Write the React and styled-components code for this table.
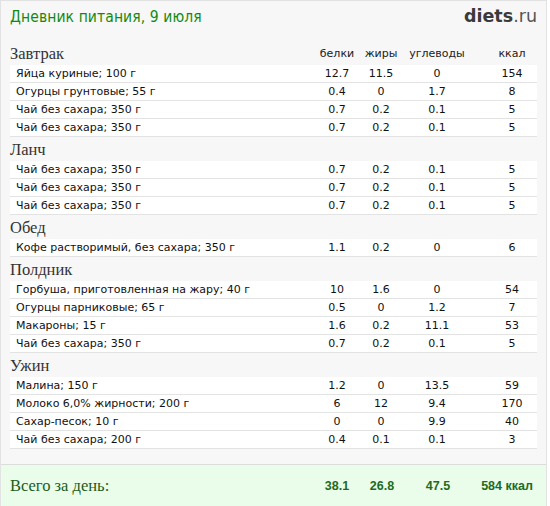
import React from "react";
import styled, { createGlobalStyle } from "styled-components";

const Global = createGlobalStyle`
  html, body { margin: 0; padding: 0; background: #ffffff; }
  * { box-sizing: border-box; }
`;

const Page = styled.div`
  width: 547px;
  height: 506px;
  background: #f7f7f7;
  border: 1px solid #e2e2e2;
  border-bottom: none;
  display: flex;
  flex-direction: column;
  font-family: "DejaVu Sans", Verdana, sans-serif;
`;

const TopBar = styled.header`
  height: 40px;
  padding: 0 9px 0 9px;
  display: flex;
  justify-content: space-between;
  align-items: flex-start;
`;

const Title = styled.h1`
  margin: 6px 0 0 0;
  font-family: "DejaVu Sans Condensed", "DejaVu Sans", Verdana, sans-serif;
  font-weight: normal;
  font-size: 15.5px;
  letter-spacing: 0.1px;
  line-height: 20px;
  color: #128a12;
`;

const Logo = styled.div`
  margin: 4px 0 0 0;
  font-family: "DejaVu Sans", Verdana, sans-serif;
  font-size: 17.5px;
  line-height: 22px;
  color: #444;
  b { font-weight: bold; color: #3a3a3a; }
  span { color: #555; }
`;

const Body = styled.main`
  padding: 0 9px;
  flex: 1;
`;

const Grid = styled.div`
  display: grid;
  grid-template-columns: 1fr 44px 44px 68px 66px;
  align-items: center;
`;

const SectionHead = styled(Grid)`
  height: 24px;
`;

const SectionName = styled.div`
  font-family: "Liberation Serif", "DejaVu Serif", serif;
  font-size: 16.5px;
  color: #333;
  padding-top: 2px;
`;

const ColLabel = styled.div`
  font-size: 11px;
  color: #222;
  text-align: center;
  padding-left: ${(p) => (p.$last ? "16px" : "0")};
`;

const Row = styled(Grid)`
  height: 18px;
  background: #ffffff;
  border-bottom: 1px solid #e3e3e3;
  font-size: 11px;
  color: #111;
`;

const Name = styled.div`
  padding-left: 6px;
  white-space: nowrap;
`;

const Num = styled.div`
  text-align: center;
  padding-left: ${(p) => (p.$last ? "16px" : "0")};
`;

const Footer = styled.footer`
  height: 42px;
  margin-top: 15px;
  background: #eafcea;
  border-top: 1px solid #dcdcdc;
  padding: 0 9px;
  display: grid;
  grid-template-columns: 1fr 44px 46px 66px 66px;
  align-items: center;
`;

const TotalLabel = styled.div`
  font-family: "Liberation Serif", "DejaVu Serif", serif;
  font-size: 16.5px;
  color: #1a5c1a;
`;

const TotalNum = styled.div`
  font-family: "Liberation Sans", Arial, sans-serif;
  font-weight: bold;
  font-size: 12.5px;
  color: #1e6b1e;
  text-align: center;
  white-space: nowrap;
  padding-left: ${(p) => (p.$last ? "6px" : "0")};
`;

const sections = [
  {
    name: "Завтрак",
    labels: true,
    rows: [
      ["Яйца куриные; 100 г", "12.7", "11.5", "0", "154"],
      ["Огурцы грунтовые; 55 г", "0.4", "0", "1.7", "8"],
      ["Чай без сахара; 350 г", "0.7", "0.2", "0.1", "5"],
      ["Чай без сахара; 350 г", "0.7", "0.2", "0.1", "5"],
    ],
  },
  {
    name: "Ланч",
    rows: [
      ["Чай без сахара; 350 г", "0.7", "0.2", "0.1", "5"],
      ["Чай без сахара; 350 г", "0.7", "0.2", "0.1", "5"],
      ["Чай без сахара; 350 г", "0.7", "0.2", "0.1", "5"],
    ],
  },
  {
    name: "Обед",
    rows: [["Кофе растворимый, без сахара; 350 г", "1.1", "0.2", "0", "6"]],
  },
  {
    name: "Полдник",
    rows: [
      ["Горбуша, приготовленная на жару; 40 г", "10", "1.6", "0", "54"],
      ["Огурцы парниковые; 65 г", "0.5", "0", "1.2", "7"],
      ["Макароны; 15 г", "1.6", "0.2", "11.1", "53"],
      ["Чай без сахара; 350 г", "0.7", "0.2", "0.1", "5"],
    ],
  },
  {
    name: "Ужин",
    rows: [
      ["Малина; 150 г", "1.2", "0", "13.5", "59"],
      ["Молоко 6,0% жирности; 200 г", "6", "12", "9.4", "170"],
      ["Сахар-песок; 10 г", "0", "0", "9.9", "40"],
      ["Чай без сахара; 200 г", "0.4", "0.1", "0.1", "3"],
    ],
  },
];

export default function App() {
  return (
    <>
      <Global />
      <Page>
        <TopBar>
          <Title>Дневник питания, 9 июля</Title>
          <Logo>
            <b>diets</b>
            <span>.ru</span>
          </Logo>
        </TopBar>
        <Body>
          {sections.map((s) => (
            <section key={s.name}>
              <SectionHead>
                <SectionName>{s.name}</SectionName>
                {s.labels && (
                  <>
                    <ColLabel>белки</ColLabel>
                    <ColLabel>жиры</ColLabel>
                    <ColLabel>углеводы</ColLabel>
                    <ColLabel $last>ккал</ColLabel>
                  </>
                )}
              </SectionHead>
              {s.rows.map((r, i) => (
                <Row key={i}>
                  <Name>{r[0]}</Name>
                  <Num>{r[1]}</Num>
                  <Num>{r[2]}</Num>
                  <Num>{r[3]}</Num>
                  <Num $last>{r[4]}</Num>
                </Row>
              ))}
            </section>
          ))}
        </Body>
        <Footer>
          <TotalLabel>Всего за день:</TotalLabel>
          <TotalNum>38.1</TotalNum>
          <TotalNum>26.8</TotalNum>
          <TotalNum>47.5</TotalNum>
          <TotalNum $last>584 ккал</TotalNum>
        </Footer>
      </Page>
    </>
  );
}
